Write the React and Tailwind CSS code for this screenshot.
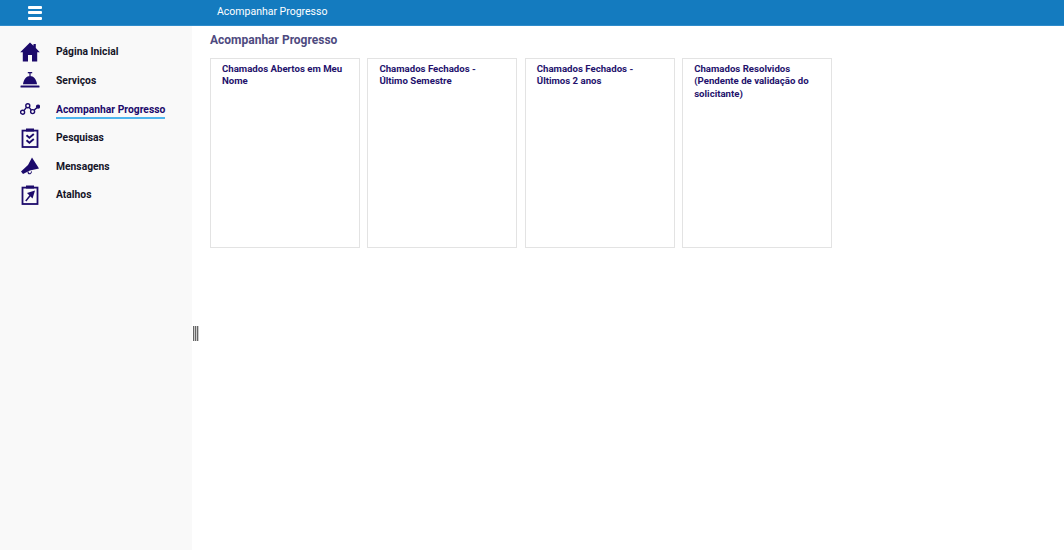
const INK = '#1c0a6b';

const Home = () => (
  <svg width="20" height="20" viewBox="0 0 20 20" fill={INK}>
    <path d="M10 0.5 L13.5 3.8 V2 H15.8 V6 L19.8 10.2 H17.2 V19.5 H12 V13 H8 V19.5 H2.8 V10.2 H0.2 Z" />
  </svg>
);
const Bell = () => (
  <svg width="20" height="20" viewBox="0 0 20 20" fill={INK}>
    <rect x="7.8" y="2" width="4.4" height="1.3" />
    <rect x="9.4" y="3" width="1.2" height="3" />
    <path d="M3 14.2 C3.5 9.5 6.5 6 10 6 C13.5 6 16.5 9.5 17 14.2 Z" />
    <rect x="0.5" y="15.4" width="19" height="2.2" rx="0.6" />
  </svg>
);
const Progress = () => (
  <svg width="20" height="20" viewBox="0 0 20 20" fill="none" stroke={INK} strokeWidth="1.4">
    <circle cx="2.6" cy="13.2" r="2" />
    <circle cx="7.8" cy="6.8" r="2" />
    <circle cx="12.6" cy="12.6" r="2" />
    <circle cx="18" cy="7.6" r="1.4" fill={INK} />
    <path d="M3.9 11.6 L6.5 8.4 M9.1 8.4 L11.3 11 M14 11.2 L17 8.6" />
  </svg>
);
const Survey = () => (
  <svg width="18" height="20" viewBox="0 0 18 20" fill="none" stroke={INK}>
    <rect x="1.5" y="2.6" width="15" height="16.4" strokeWidth="1.8" />
    <rect x="5" y="0.5" width="8" height="3" fill={INK} stroke="none" />
    <path d="M5.5 7.2 L8.4 9.8 L12.8 6 M5.5 12.2 L8.4 14.8 L12.8 11" strokeWidth="1.9" />
  </svg>
);
const Megaphone = () => (
  <svg width="20" height="20" viewBox="0 0 20 20" fill={INK}>
    <path d="M12 1.5 L19 12.5 L10 14.5 L3 18 L1 15.5 L8 9 Z" />
    <path d="M7.5 16 C7.5 19.5 12 19 12 15.2 L11 15.4 C11 17.5 8.6 18 8.6 15.6 Z" />
  </svg>
);
const Shortcut = () => (
  <svg width="18" height="20" viewBox="0 0 18 20" fill="none" stroke={INK}>
    <rect x="1.5" y="2.6" width="15" height="16.4" strokeWidth="1.8" />
    <rect x="5" y="0.5" width="8" height="3" fill={INK} stroke="none" />
    <path d="M14 5.5 L6 8 L11.5 13.5 Z" fill={INK} stroke="none" />
    <path d="M10 9.5 L4.8 16" strokeWidth="1.5" />
  </svg>
);

const nav = [
  { label: 'Página Inicial', Icon: Home },
  { label: 'Serviços', Icon: Bell },
  { label: 'Acompanhar Progresso', Icon: Progress, active: true },
  { label: 'Pesquisas', Icon: Survey },
  { label: 'Mensagens', Icon: Megaphone },
  { label: 'Atalhos', Icon: Shortcut },
];

const cards = [
  'Chamados Abertos em Meu Nome',
  'Chamados Fechados - Último Semestre',
  'Chamados Fechados - Últimos 2 anos',
  'Chamados Resolvidos (Pendente de validação do solicitante)',
];

export default function App() {
  return (
    <div className="h-[550px] w-[1064px] overflow-hidden bg-white font-['Roboto',sans-serif] flex flex-col">
      <header className="h-[26px] shrink-0 bg-[#147bbf] border-b border-[#2f8ccb] flex items-center text-white">
        <div className="w-[192px] flex pl-[28px]">
          <div className="w-[14px] flex flex-col gap-[2.5px]">
            <span className="block h-[3px] w-[14px] rounded-[1px] bg-white" />
            <span className="block h-[3px] w-[14px] rounded-[1px] bg-white" />
            <span className="block h-[3px] w-[14px] rounded-[1px] bg-white" />
          </div>
        </div>
        <span className="ml-[25px] text-[10.5px] leading-none">Acompanhar Progresso</span>
      </header>
      <div className="flex flex-1 min-h-0">
        <aside className="relative w-[192px] shrink-0 bg-[#f9f9f9] pt-[11.6px]">
          {nav.map(({ label, Icon, active }) => (
            <div key={label} className="h-[28.6px] flex items-center">
              <div className="w-[20px] ml-[19.5px] flex justify-center">
                <Icon />
              </div>
              <span
                className={`ml-[16.5px] text-[10.3px] leading-[15px] font-bold ${
                  active ? 'text-[#1c0a6b] border-b-2 border-[#4db5ee] mt-[2px]' : 'text-[#141428]'
                }`}
              >
                {label}
              </span>
            </div>
          ))}
          <div className="absolute left-[193px] top-[300px] h-[15px] w-[6px] bg-[repeating-linear-gradient(90deg,#666_0px,#666_1px,#ccc_1px,#ccc_2px)]" />
        </aside>
        <main className="flex-1 pl-[18px] pt-[6px]">
          <h1 className="text-[12px] leading-[16px] font-bold text-[#4e4a80]">Acompanhar Progresso</h1>
          <div className="mt-[10px] flex gap-[7.4px]">
            {cards.map((c) => (
              <div
                key={c}
                className="h-[190px] w-[150px] border border-[#e3e3e3] bg-white pl-[11px] pr-[14px] pt-[4px] text-[9.65px] leading-[12.3px] font-bold text-[#24126c]"
              >
                {c}
              </div>
            ))}
          </div>
        </main>
      </div>
    </div>
  );
}
